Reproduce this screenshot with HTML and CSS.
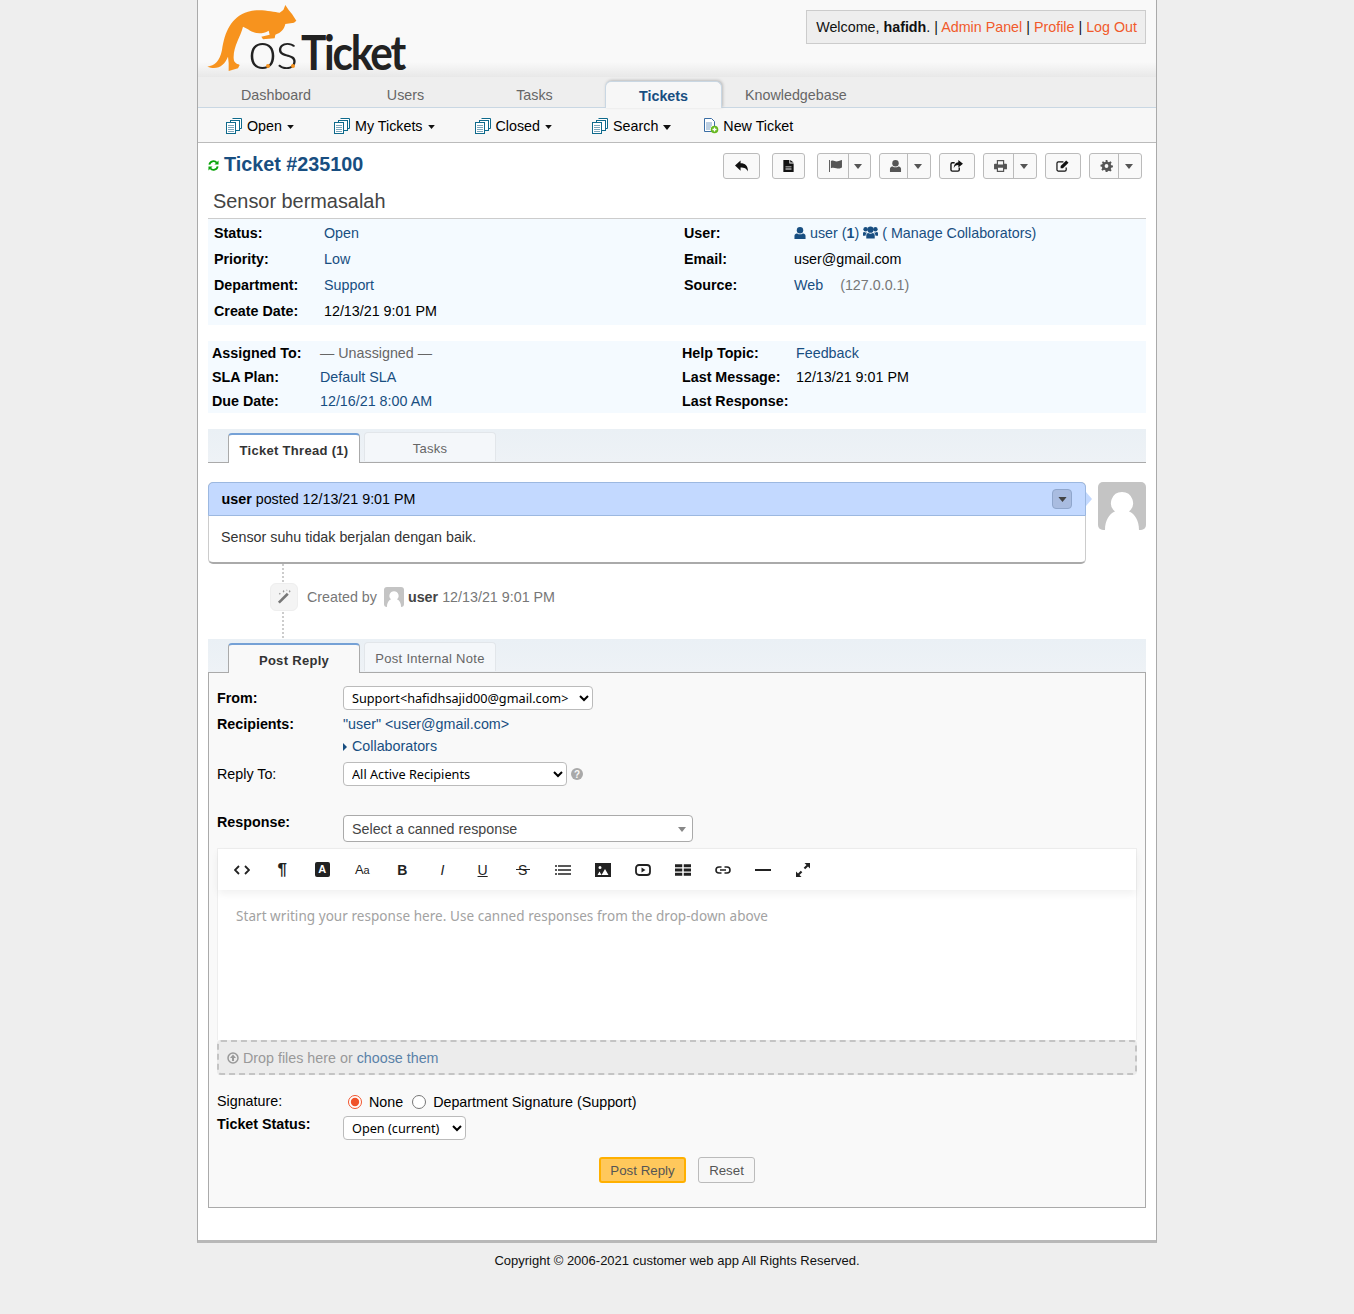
FILE: index.html
```html
<!DOCTYPE html>
<html lang="en">
<head>
    <meta charset="UTF-8">
    <title>osTicket :: Ticket #235100</title>
    <link rel="stylesheet" href="styles.css">
</head>
<body>
    <svg class="sprites" width="0" height="0">
        <symbol id="docs" viewBox="0 0 16 16">
            <path d="M6.500 .5h9v10h-2M4.500 2.500h9v10h-2" fill="#fff" stroke="#0f6a8c"/>
            <rect x="4.500" y="2.500" width="9" height="10" fill="#fff" stroke="#0f6a8c"/>
            <rect x=".5" y="4.500" width="9" height="11" fill="#fff" stroke="#0f6a8c"/>
            <path d="M2 7.500h6M2 9.500h6M2 11.500h6M2 13.500h6" stroke="#7aa6bb"/>
        </symbol>
        <symbol id="caret" viewBox="0 0 10 6">
            <path d="M0 0h10L5 6z"/>
        </symbol>
        <symbol id="avatar" viewBox="0 0 48 48">
            <path d="M24 10a11 11 0 0 1 7 19.500c6 2.500 10 9 10 18.500H7c0-9.500 4-16 10-18.500A11 11 0 0 1 24 10z" fill="#fff"/>
        </symbol>
    </svg>

    <div class="container">
        <header class="header">
            <a href="#" class="logo">
                <span class="logo-os">os</span><span class="logo-ticket">Ticket</span>
                <svg class="kangaroo" viewBox="0 0 630 222">
                    <path fill="#f7931e" d="M28 200C50 196 65 185 72 150 80 95 100 50 150 35 185 25 225 36 245 38L256 30 262 15 272 30 282 42 295 62 288 68 262 72C258 88 250 98 232 104L230 115 195 118 190 110 215 104 212 92C190 105 165 100 150 88L135 80C128 110 105 140 107 175 108 190 115 190 125 195L120 205 92 213 92 190 90 170C80 195 60 212 28 200Z"/>
                    <circle cx="210" cy="198" r="6" fill="#f7931e"/>
                    <circle cx="285" cy="198" r="6" fill="#f7931e"/>
                </svg>
            </a>
            <p class="welcome">Welcome, <strong>hafidh</strong>. | <a href="#">Admin Panel</a> | <a href="#">Profile</a> | <a href="#">Log Out</a></p>
        </header>

        <nav class="nav">
            <a href="#" class="nav-item nav-dashboard">Dashboard</a>
            <a href="#" class="nav-item nav-users">Users</a>
            <a href="#" class="nav-item nav-tasks">Tasks</a>
            <a href="#" class="nav-item nav-tickets active">Tickets</a>
            <a href="#" class="nav-item nav-kb">Knowledgebase</a>
        </nav>
        <div class="subnav">
            <a href="#" class="sub-item sub-open"><svg class="doc-icon"><use href="#docs"/></svg>Open<svg class="sub-caret"><use href="#caret"/></svg></a>
            <a href="#" class="sub-item sub-mine"><svg class="doc-icon"><use href="#docs"/></svg>My Tickets<svg class="sub-caret"><use href="#caret"/></svg></a>
            <a href="#" class="sub-item sub-closed"><svg class="doc-icon"><use href="#docs"/></svg>Closed<svg class="sub-caret"><use href="#caret"/></svg></a>
            <a href="#" class="sub-item sub-search"><svg class="doc-icon"><use href="#docs"/></svg>Search<svg class="sub-caret"><use href="#caret"/></svg></a>
            <a href="#" class="sub-item sub-new">
                <svg class="new-icon" viewBox="0 0 16 16">
                    <path d="M1.500 .5h7l3 3v10h-10z" fill="#fff" stroke="#3b6ea5"/>
                    <path d="M3 5h6M3 7h6M3 9h5M3 11h4" stroke="#7b9fc4"/>
                    <circle cx="11.500" cy="11.500" r="3.800" fill="#66b81f"/>
                    <path d="M9.500 11.500h4M11.500 9.500v4" stroke="#fff" stroke-width="1.300"/>
                </svg>New Ticket</a>
        </div>

        <main class="content">
            <div class="ticket-head">
                <h2 class="ticket-title">
                    <svg class="refresh" viewBox="0 0 12 12"><path d="M1.500 5A4.500 4.500 0 0 1 9.500 3M10.500 7A4.500 4.500 0 0 1 2.500 9" fill="none" stroke="#0aa30a" stroke-width="2"/><path d="M11.500 .5v4.500H7zM.5 11.500V7H5z" fill="#0aa30a"/></svg>
                    <a href="#">Ticket #235100</a>
                </h2>
                <div class="actions">
                    <button class="act w37"><svg viewBox="0 0 14 12"><path d="M6 0v3c5 0 8 2.500 8 9-1.500-3.500-4-4.500-8-4.500V11L0 5.500z"/></svg></button>
                    <button class="act w33 gap12"><svg viewBox="0 0 12 14"><path d="M0 0h7v4h5v10H0zM8 0l4 3H8zM2.500 7.500h7v1h-7zM2.500 10h7v1h-7z" fill-rule="evenodd"/></svg></button>
                    <div class="act-split gap12 w54"><span class="act-main m31"><svg class="grey" viewBox="0 0 14 13"><path d="M0 0h1v13H0zM2 1c3-1.500 4 .5 6 .5S11 1 14 0v8c-3 1.500-4 1.500-6 1S4 8 2 9z"/></svg></span><span class="act-drop"><svg viewBox="0 0 10 6"><use href="#caret"/></svg></span></div>
                    <div class="act-split w52"><span class="act-main m28"><svg class="grey" viewBox="0 0 12 13"><circle cx="6" cy="3.500" r="3.500"/><path d="M0 13V9.500C0 7.500 2 7 3 7c1.500 1.300 4.500 1.300 6 0 1 0 3 .5 3 2.500V13z"/></svg></span><span class="act-drop"><svg viewBox="0 0 10 6"><use href="#caret"/></svg></span></div>
                    <button class="act w36"><svg viewBox="0 0 14 13"><path d="M5 3H2.500A1.500 1.500 0 0 0 1 4.500v6A1.500 1.500 0 0 0 2.500 12h6a1.500 1.500 0 0 0 1.500-1.500V8" fill="none" stroke="#111" stroke-width="1.500"/><path d="M9 0l5 4-5 4V5.500C6.500 5.500 5 6.500 4 9c0-4 2-6 5-6.500z"/></svg></button>
                    <div class="act-split w54"><span class="act-main m30"><svg class="grey" viewBox="0 0 14 13"><path d="M3 0h8v4h2a1 1 0 0 1 1 1v5h-3v3H3v-3H0V5a1 1 0 0 1 1-1h2zM4.300 1.300V5h5.400V1.300zM4.300 8.500v3.200h5.400V8.500z" fill-rule="evenodd"/></svg></span><span class="act-drop"><svg viewBox="0 0 10 6"><use href="#caret"/></svg></span></div>
                    <button class="act w36"><svg viewBox="0 0 14 13"><path d="M11 8v2.500a1.500 1.500 0 0 1-1.500 1.500h-7A1.500 1.500 0 0 1 1 10.500v-7A1.500 1.500 0 0 1 2.500 2H8" fill="none" stroke="#111" stroke-width="1.300"/><path d="M5 6.500L11 .5 13.500 3l-6 6H5z"/></svg></button>
                    <div class="act-split w53"><span class="act-main m29"><svg class="grey" viewBox="0 0 14 14"><path d="M6 0h2l.4 2 1.500.6L11.600 1.500l1.400 1.400-1.100 1.700.6 1.500 2 .4v2l-2 .4-.6 1.500 1.100 1.700-1.400 1.400-1.700-1.100-1.500.6L8 14H6l-.4-2-1.500-.6-1.700 1.100L1 11.100l1.100-1.700-.6-1.500L0 7.500v-2l2-.4.6-1.500L1.500 2.900 2.900 1.500l1.700 1.100L6 2zM7 4.800a2.200 2.200 0 1 0 0 4.400 2.200 2.200 0 0 0 0-4.400z" fill-rule="evenodd"/></svg></span><span class="act-drop"><svg viewBox="0 0 10 6"><use href="#caret"/></svg></span></div>
                </div>
            </div>

            <h3 class="subject">Sensor bermasalah</h3>

            <div class="info info-top">
                <table>
                    <tr><th>Status:</th><td><a href="#">Open</a></td></tr>
                    <tr><th>Priority:</th><td><a href="#">Low</a></td></tr>
                    <tr><th>Department:</th><td><a href="#">Support</a></td></tr>
                    <tr><th>Create Date:</th><td>12/13/21 9:01 PM</td></tr>
                </table>
                <table>
                    <tr><th>User:</th><td><a href="#"><svg class="mini" viewBox="0 0 12 13"><circle cx="6" cy="3.500" r="3.500"/><path d="M0 13V9.500C0 7.500 2 7 3 7c1.500 1.300 4.500 1.300 6 0 1 0 3 .5 3 2.500V13z"/></svg> user (<b>1</b>)</a> <a href="#"><svg class="mini-group" viewBox="0 0 16 13"><circle cx="8" cy="3.500" r="3.300"/><circle cx="2.800" cy="3" r="2.400"/><circle cx="13.200" cy="3" r="2.400"/><path d="M3.500 13V9.500C3.500 8 4.500 7 5.500 7c1.500 1 3.500 1 5 0 1 0 2 1 2 2.500V13zM0 10V7.500C0 6.500.7 6 1.500 6c1 .6 1.800.6 2.700.4C3.300 7.300 2.800 8.500 2.600 10zM16 10V7.500c0-1-.7-1.500-1.500-1.500-1 .6-1.800.6-2.700.4.900.9 1.400 2.100 1.600 3.600z"/></svg> ( Manage Collaborators)</a></td></tr>
                    <tr><th>Email:</th><td>user@gmail.com</td></tr>
                    <tr><th>Source:</th><td><a href="#">Web</a> <span class="ip">(127.0.0.1)</span></td></tr>
                </table>
            </div>

            <div class="info info-bottom">
                <table>
                    <tr><th>Assigned To:</th><td><span class="muted">— Unassigned —</span></td></tr>
                    <tr><th>SLA Plan:</th><td><a href="#">Default SLA</a></td></tr>
                    <tr><th>Due Date:</th><td><a href="#">12/16/21 8:00 AM</a></td></tr>
                </table>
                <table>
                    <tr><th>Help Topic:</th><td><a href="#">Feedback</a></td></tr>
                    <tr><th>Last Message:</th><td>12/13/21 9:01 PM</td></tr>
                    <tr><th>Last Response:</th><td></td></tr>
                </table>
            </div>

            <div class="tabs">
                <a href="#" class="tab active">Ticket Thread (1)</a>
                <a href="#" class="tab">Tasks</a>
            </div>

            <div class="thread">
                <article class="entry">
                    <div class="entry-head">
                        <span><b>user</b> posted 12/13/21 9:01 PM</span>
                        <span class="entry-menu"><svg viewBox="0 0 10 6"><use href="#caret"/></svg></span>
                    </div>
                    <div class="entry-body">Sensor suhu tidak berjalan dengan baik.</div>
                </article>
                <div class="avatar"><svg viewBox="0 0 48 48"><use href="#avatar"/></svg></div>
            </div>

            <div class="event">
                <span class="event-icon">
                    <svg viewBox="0 0 16 16"><path d="M1 13.500L10.500 4l2 2L3 15.500z" fill="#777"/><path d="M7 1l1 1.500L7 4 6 2.500zM13.500 1l1 1.500-1 1.500-1-1.500zM3 4l1 1-1 1-1-1zM10.500 .5l.7.7-.7.7-.7-.7z" fill="#999"/></svg>
                </span>
                <span class="event-text">Created by <span class="event-avatar"><svg viewBox="0 0 48 48"><use href="#avatar"/></svg></span> <b>user</b> 12/13/21 9:01 PM</span>
            </div>

            <div class="tabs tabs-reply">
                <a href="#" class="tab active">Post Reply</a>
                <a href="#" class="tab">Post Internal Note</a>
            </div>

            <form class="reply">
                <div class="row row-from">
                    <label class="lbl strong">From:</label>
                    <select class="sel sel-from"><option>Support&lt;hafidhsajid00@gmail.com&gt;</option></select>
                </div>
                <div class="row row-rcpt">
                    <label class="lbl strong">Recipients:</label>
                    <a href="#">"user" &lt;user@gmail.com&gt;</a>
                </div>
                <div class="row row-collab">
                    <span class="lbl"></span>
                    <a href="#" class="collab"><i class="arrow"></i>Collaborators</a>
                </div>
                <div class="row row-replyto">
                    <label class="lbl">Reply To:</label>
                    <select class="sel sel-replyto"><option>All Active Recipients</option></select>
                    <svg class="help" viewBox="0 0 12 12"><circle cx="6" cy="6" r="6" fill="#a9a9a9"/><text x="6" y="9.500" text-anchor="middle" class="help-mark">?</text></svg>
                </div>
                <div class="row row-response">
                    <label class="lbl strong">Response:</label>
                    <div class="canned">Select a canned response<i class="canned-arrow"></i></div>
                </div>

                <div class="editor">
                    <div class="toolbar">
                        <span class="tool"><svg viewBox="0 0 16 10"><path d="M5 1L1 5l4 4M11 1l4 4-4 4" fill="none" stroke="#222" stroke-width="1.800"/></svg></span>
                        <span class="tool t-glyph">¶</span>
                        <span class="tool"><span class="t-box">A</span></span>
                        <span class="tool t-aa">A<small>a</small></span>
                        <span class="tool t-b">B</span>
                        <span class="tool t-i">I</span>
                        <span class="tool t-u">U</span>
                        <span class="tool t-s">S</span>
                        <span class="tool"><svg viewBox="0 0 16 10"><path d="M3 1h13M3 5h13M3 9h13M0 1h2M0 5h2M0 9h2" stroke="#222" stroke-width="1.600"/></svg></span>
                        <span class="tool"><svg class="t-img" viewBox="0 0 16 14"><path d="M0 0h16v14H0zM5 3a1.500 1.500 0 1 0 0 3 1.500 1.500 0 0 0 0-3zM2.500 12h4l-2-3.500zM6.500 12h7L10 6z" fill="#222" fill-rule="evenodd"/></svg></span>
                        <span class="tool"><svg class="t-img" viewBox="0 0 16 12"><rect x="1" y="1" width="14" height="10" rx="3" fill="none" stroke="#222" stroke-width="1.800"/><path d="M6.500 3.500L10.500 6l-4 2.500z" fill="#222"/></svg></span>
                        <span class="tool"><svg class="t-img" viewBox="0 0 15 11"><path d="M0 0h6.800v3H0zM8.200 0H15v3H8.200zM0 4h6.800v3H0zM8.200 4H15v3H8.200zM0 8h6.800v3H0zM8.200 8H15v3H8.200z" fill="#222"/></svg></span>
                        <span class="tool"><svg class="t-img" viewBox="0 0 16 8"><path d="M6.500 1H4a3 3 0 0 0 0 6h2.500M9.500 1H12a3 3 0 0 1 0 6H9.500M5 4h6" fill="none" stroke="#222" stroke-width="1.600"/></svg></span>
                        <span class="tool"><svg class="t-img" viewBox="0 0 16 2"><path d="M0 0h16v2H0z" fill="#222"/></svg></span>
                        <span class="tool"><svg class="t-exp" viewBox="0 0 14 14"><path d="M8.500 0H14v5.500L12 3.500l-2.800 2.800-1.500-1.500L10.500 2zM5.500 14H0V8.500L2 10.500l2.800-2.800 1.500 1.500L3.500 12z" fill="#222"/></svg></span>
                    </div>
                    <div class="editor-area">Start writing your response here. Use canned responses from the drop-down above</div>
                </div>
                <div class="dropzone">
                    <svg viewBox="0 0 12 12"><circle cx="6" cy="6" r="5" fill="none" stroke="#999" stroke-width="1.500"/><path d="M6 2.500L9 6H7v3H5V6H3z" fill="#999"/></svg>
                    <span>Drop files here or</span>
                    <a href="#">choose them</a>
                </div>

                <div class="row row-sign">
                    <label class="lbl">Signature:</label>
                    <label class="radio"><input type="radio" name="sig" checked> None</label>
                    <label class="radio"><input type="radio" name="sig"> Department Signature (Support)</label>
                </div>
                <div class="row row-status">
                    <label class="lbl strong">Ticket Status:</label>
                    <select class="sel sel-status"><option>Open (current)</option></select>
                </div>
                <div class="buttons">
                    <button type="button" class="btn btn-primary">Post Reply</button>
                    <button type="button" class="btn">Reset</button>
                </div>
            </form>
        </main>
    </div>

    <footer class="footer">Copyright © 2006-2021 customer web app All Rights Reserved.</footer>
</body>
</html>
```

FILE: styles.css
```css
* {
    box-sizing: border-box;
}

body {
    margin: 0;
    background: #eeeeee;
    font-family: "Liberation Sans", Arial, sans-serif;
    font-size: 14.300px;
    color: #000;
}

a {
    color: #184e81;
    text-decoration: none;
}

.sprites {
    position: absolute;
}

.container {
    width: 960px;
    height: 1243px;
    margin-left: 197px;
    background: #fff;
    border-left: 1px solid #aaa;
    border-right: 1px solid #aaa;
    border-bottom: 3px solid #b8b8b8;
}

/* header */
.header {
    position: relative;
    height: 77px;
    background: linear-gradient(#f9f9f9 0, #f9f9f9 62px, #e8e8e8 77px);
}

.logo {
    position: absolute;
    left: 0;
    top: 0;
    width: 215px;
    height: 76px;
}

.kangaroo {
    position: absolute;
    left: 0;
    top: 0;
    width: 210px;
    height: 74px;
}

.logo-os {
    position: absolute;
    left: 50px;
    top: 19px;
    font-family: Lato, sans-serif;
    font-weight: 300;
    font-size: 52px;
    line-height: 60px;
    letter-spacing: -1px;
    color: #222;
}

.logo-ticket {
    position: absolute;
    left: 103px;
    top: 22px;
    font-family: Lato, sans-serif;
    font-weight: 700;
    font-size: 47px;
    line-height: 60px;
    letter-spacing: -2.400px;
    color: #222;
    transform: scaleX(.9);
    transform-origin: left;
}

.welcome {
    position: absolute;
    top: 10px;
    right: 10px;
    margin: 0;
    height: 34px;
    padding: 0 8px 0 9px;
    line-height: 32px;
    background: #eee;
    border: 1px solid #ccc;
    color: #111;
}

.welcome a {
    color: #f15a2b;
}

/* nav */
.nav {
    display: flex;
    height: 31px;
    background: #eeeeee;
    border-bottom: 1px solid #c9d7e3;
}

.nav-item {
    display: block;
    line-height: 36px;
    text-align: center;
    color: #666;
    height: 30px;
}

.nav-dashboard { width: 156px; }
.nav-users { width: 103px; }
.nav-tasks { width: 155px; margin-right: -7px; }
.nav-tickets { width: 117px; }
.nav-kb { padding-left: 23px; }

.nav-item.active {
    height: 27px;
    margin-top: 4px;
    line-height: 28px;
    background: #f7f7f7;
    border: 1px solid #c9d7e3;
    border-bottom: none;
    border-radius: 6px 6px 0 0;
    box-shadow: 1px -1px 3px #bbb;
    color: #184e81;
    font-weight: bold;
}

.subnav {
    display: flex;
    align-items: center;
    height: 35px;
    padding-top: 2px;
    background: #f7f7f7;
    border-bottom: 1px solid #bbb;
}

.sub-item {
    display: flex;
    align-items: center;
    color: #000;
}

.sub-open { margin-left: 28px; }
.sub-mine { margin-left: 40px; }
.sub-closed { margin-left: 40px; }
.sub-search { margin-left: 40px; }
.sub-new { margin-left: 32px; }

.doc-icon {
    width: 16px;
    height: 16px;
    margin-right: 5px;
}

.new-icon {
    width: 16px;
    height: 16px;
    margin-right: 4px;
}

.sub-caret {
    width: 7px;
    height: 4px;
    margin-left: 5px;
    margin-top: 2px;
    fill: #111;
}

.sub-search .sub-caret {
    width: 8px;
    height: 5px;
}

/* ticket heading */
.content {
    padding: 0 10px;
}

.ticket-head {
    display: flex;
    justify-content: space-between;
    height: 44px;
    padding-top: 9px;
}

.ticket-title {
    display: flex;
    align-items: center;
    height: 24px;
    margin: 0;
    font-size: 19.800px;
    line-height: 24px;
}

.refresh {
    width: 11px;
    height: 11px;
    margin-right: 5px;
    margin-top: 2px;
}

.actions {
    display: flex;
    padding-right: 4px;
    height: 26px;
    margin-top: 1px;
}

.act,
.act-split {
    display: flex;
    align-items: center;
    justify-content: center;
    height: 26px;
    padding: 0;
    margin-left: 8px;
    background: #f9f9f9;
    border: 1px solid #bbb;
    border-radius: 3px;
}

.act {
    padding-right: 1px;
}

.act-split.gap12,
.act.gap12 { margin-left: 12px; }

.w33 { width: 33px; }
.w36 { width: 36px; }
.w37 { width: 37px; }
.w52 { width: 52px; }
.w53 { width: 53px; }
.w54 { width: 54px; }

.m28 { width: 28px; }
.m29 { width: 29px; }
.m30 { width: 30px; }
.m31 { width: 31px; }

.act svg,
.act-main svg {
    width: 13px;
    height: 12px;
    fill: #111;
}

.act-main svg.grey {
    fill: #555;
}

.act-main {
    display: flex;
    flex-shrink: 0;
    align-items: center;
    justify-content: center;
    height: 100%;
    padding-left: 4px;
    border-right: 1px solid #bbb;
}

.act-drop {
    display: flex;
    flex: 1;
    align-items: center;
    justify-content: center;
    padding-right: 3px;
}

.act-drop svg {
    width: 8px;
    height: 5px;
    fill: #555;
}

.subject {
    margin: 0;
    height: 32px;
    padding-left: 5px;
    font-size: 19.900px;
    font-weight: normal;
    line-height: 29px;
    color: #444;
    border-bottom: 1px solid #ccc;
}

/* info tables */
.info {
    display: flex;
    align-items: flex-start;
    background: #f4faff;
}

.info table {
    flex-shrink: 0;
    width: 470px;
    border-collapse: collapse;
}

.info table:last-child {
    width: 460px;
}

.info th {
    text-align: left;
    font-weight: bold;
    padding: 0;
}

.info td {
    padding: 0;
}

.info-top {
    height: 106px;
    padding-left: 6px;
    padding-top: 1px;
}

.info-top tr {
    height: 26px;
}

.info-top th {
    width: 110px;
}

.info-bottom {
    height: 72px;
    margin-top: 16px;
    padding-left: 4px;
}

.info-bottom tr {
    height: 24px;
}

.info-bottom th {
    width: 108px;
}

.info-bottom table:last-child th {
    width: 114px;
}

.mini {
    width: 12px;
    height: 12px;
    fill: #184e81;
    vertical-align: -1px;
}

.mini-group {
    width: 15px;
    height: 13px;
    fill: #184e81;
    vertical-align: -1px;
}

.ip {
    margin-left: 13px;
    color: #777;
}

.muted {
    color: #666;
}

/* tabs */
.tabs {
    display: flex;
    align-items: flex-end;
    height: 34px;
    margin-top: 16px;
    padding-left: 20px;
    background: linear-gradient(#eaf0f5, #eef2f6);
    border-bottom: 1px solid #aaa;
}

.tab {
    display: block;
    width: 132px;
    height: 29px;
    margin-right: 4px;
    margin-bottom: 1px;
    text-align: center;
    font-size: 13px;
    letter-spacing: .3px;
    line-height: 31px;
    color: #666;
    background: #f4f7fa;
    border: 1px solid #e2e6ea;
    border-bottom: none;
    border-radius: 4px 4px 0 0;
}

.tab.active {
    height: 30px;
    margin-bottom: -1px;
    color: #333;
    font-weight: bold;
    line-height: 32px;
    background: #fff;
    border: 1px solid #aaa;
    border-top: 2px solid #75a1d6;
    border-bottom: none;
}

.tabs-reply {
    margin-top: 0;
}

.tabs-reply .tab.active {
    background: #f9f9f9;
}

/* thread */
.thread {
    display: flex;
    justify-content: space-between;
    margin-top: 19px;
}

.entry {
    position: relative;
    width: 878px;
    height: 82px;
    background: #fff;
    border: 1px solid #ccc;
    border-bottom: 2px solid #aaa;
    border-radius: 5px;
}

.entry-head {
    position: relative;
    display: flex;
    align-items: center;
    justify-content: space-between;
    height: 34px;
    margin: -1px -1px 0;
    padding: 0 13px 0 12.500px;
    background: #c3d9ff;
    border: 1px solid #9cb8e0;
    border-radius: 5px 5px 0 0;
}

.entry-head::after {
    content: "";
    position: absolute;
    right: -7px;
    top: 9px;
    border-left: 6px solid #c3d9ff;
    border-top: 7px solid transparent;
    border-bottom: 7px solid transparent;
}

.entry-menu {
    display: flex;
    align-items: center;
    justify-content: center;
    width: 20px;
    height: 20px;
    background: #a9bce0;
    border: 1px solid #8fa6cc;
    border-radius: 4px;
}

.entry-menu svg {
    width: 9px;
    height: 5px;
    fill: #444;
}

.entry-body {
    padding: 13px 12px;
    color: #333;
}

.avatar {
    width: 48px;
    height: 48px;
    background: #c4c4c4;
    border-radius: 5px;
    overflow: hidden;
}

.avatar svg,
.event-avatar svg {
    display: block;
    width: 100%;
    height: 100%;
}

.event {
    display: flex;
    align-items: center;
    height: 75px;
    padding-left: 62px;
    padding-bottom: 10px;
    background: repeating-linear-gradient(#ccc 0 2px, transparent 2px 4px) 74px 0 / 2px 100% no-repeat;
    color: #777;
}

.event-icon {
    display: flex;
    align-items: center;
    justify-content: center;
    width: 28px;
    height: 28px;
    margin-right: 9px;
    background: #f4f4f4;
    border: 1px solid #eee;
    border-radius: 6px;
}

.event-icon svg {
    width: 15px;
    height: 15px;
}

.event-text {
    display: flex;
    align-items: center;
    gap: 4px;
}

.event-text b {
    color: #444;
}

.event-avatar {
    display: block;
    width: 20px;
    height: 20px;
    margin-left: 3px;
    background: #c4c4c4;
    border-radius: 3px;
    overflow: hidden;
}

/* reply form */
.reply {
    height: 535px;
    padding: 13px 8px 0;
    background: #f9f9f9;
    border: 1px solid #aaa;
    border-top: none;
}

.row {
    display: flex;
    align-items: center;
}

.lbl {
    width: 126px;
    flex-shrink: 0;
}

.strong {
    font-weight: bold;
}

.sel {
    height: 24px;
    padding-left: 4px;
    background-color: #fff;
    border: 1px solid #bbb;
    border-radius: 4px;
    font-family: "Noto Sans", sans-serif;
    font-size: 12.700px;
    color: #000;
}

.row-from { height: 24px; }
.row-from .lbl { margin-top: -1px; }
.sel-from { width: 250px; }
.row-rcpt { height: 22px; margin-top: 3px; }
.row-collab { height: 22px; }
.row-replyto { height: 24px; margin-top: 5px; }
.sel-replyto { width: 224px; }
.row-response { height: 27px; margin-top: 29px; align-items: flex-start; }
.row-response .lbl { margin-top: -1px; line-height: 16px; }

.arrow {
    display: inline-block;
    margin-right: 5px;
    border-left: 4px solid #184e81;
    border-top: 4px solid transparent;
    border-bottom: 4px solid transparent;
}

.help {
    width: 12px;
    height: 12px;
    margin-left: 4px;
}

.help-mark {
    font-size: 10px;
    font-weight: bold;
    fill: #f9f9f9;
}

.canned {
    position: relative;
    width: 350px;
    height: 27px;
    padding-left: 8px;
    line-height: 26px;
    color: #444;
    background: #fff;
    border: 1px solid #aaa;
    border-radius: 4px;
}

.canned-arrow {
    position: absolute;
    right: 6px;
    top: 11px;
    border-top: 5px solid #888;
    border-left: 4px solid transparent;
    border-right: 4px solid transparent;
}

.editor {
    width: 920px;
    height: 192px;
    margin-top: 6px;
    background: #fff;
    border-left: 1px solid #eee;
    border-right: 1px solid #eee;
    border-top: 1px solid #eee;
}

.toolbar {
    display: flex;
    align-items: center;
    height: 41px;
    padding-left: 4px;
    box-shadow: 0 4px 8px rgba(0, 0, 0, .06);
}

.tool {
    display: flex;
    align-items: center;
    justify-content: center;
    width: 40.100px;
    height: 100%;
    color: #222;
}

.tool svg {
    width: 16px;
    height: 10px;
}

.tool svg.t-img {
    height: 14px;
}

.tool svg.t-exp {
    width: 14px;
    height: 14px;
}

.t-glyph {
    font-size: 17px;
    font-weight: bold;
}

.t-box {
    width: 15px;
    height: 15px;
    text-align: center;
    font-size: 11px;
    font-weight: bold;
    line-height: 15px;
    color: #fff;
    background: #222;
    border-radius: 2px;
}

.t-aa {
    font-size: 13px;
}

.t-aa small {
    font-size: 11px;
}

.t-b {
    font-weight: bold;
    font-size: 14px;
}

.t-i {
    font-style: italic;
    font-size: 14px;
}

.t-u {
    text-decoration: underline;
    font-size: 14px;
}

.t-s {
    position: relative;
    font-size: 14px;
}

.t-s::after {
    content: "";
    position: absolute;
    left: 13px;
    right: 13px;
    top: 20px;
    border-top: 1px solid #222;
}

.editor-area {
    padding: 17px 18px;
    font-family: "Noto Sans", sans-serif;
    font-size: 13.500px;
    letter-spacing: .05px;
    color: #a2a2a2;
}

.dropzone {
    display: flex;
    align-items: center;
    gap: 4px;
    width: 920px;
    height: 35px;
    padding-left: 8px;
    color: #999;
    background: #ececec;
    border: 2px dashed #c4c4c4;
    border-radius: 4px;
}

.dropzone svg {
    width: 12px;
    height: 12px;
}

.dropzone a {
    color: #5a82a8;
}

.row-sign {
    height: 24px;
    margin-top: 15px;
}

.row-sign .lbl {
    margin-top: -2px;
}

.radio {
    display: flex;
    align-items: center;
    margin-right: 4px;
    white-space: pre;
}

.radio input {
    width: 14px;
    height: 14px;
    margin: 0 3px 0 5px;
    accent-color: #f0522a;
}

.row-status {
    height: 24px;
    margin-top: 2px;
}

.row-status .lbl {
    margin-top: -8px;
}

.sel-status {
    width: 123px;
}

.buttons {
    display: flex;
    justify-content: center;
    gap: 12px;
    margin-top: 17px;
}

.btn {
    width: 57px;
    height: 26px;
    padding: 0;
    font-family: "Liberation Sans", sans-serif;
    font-size: 13.300px;
    color: #555;
    background: #f7f7f7;
    border: 1px solid #bbb;
    border-radius: 3px;
}

.btn-primary {
    width: 87px;
    color: #555;
    background: #ffc85c;
    border: 2px solid #ffb000;
}

.footer {
    padding-top: 10px;
    text-align: center;
    font-size: 13px;
    color: #111;
}
```
